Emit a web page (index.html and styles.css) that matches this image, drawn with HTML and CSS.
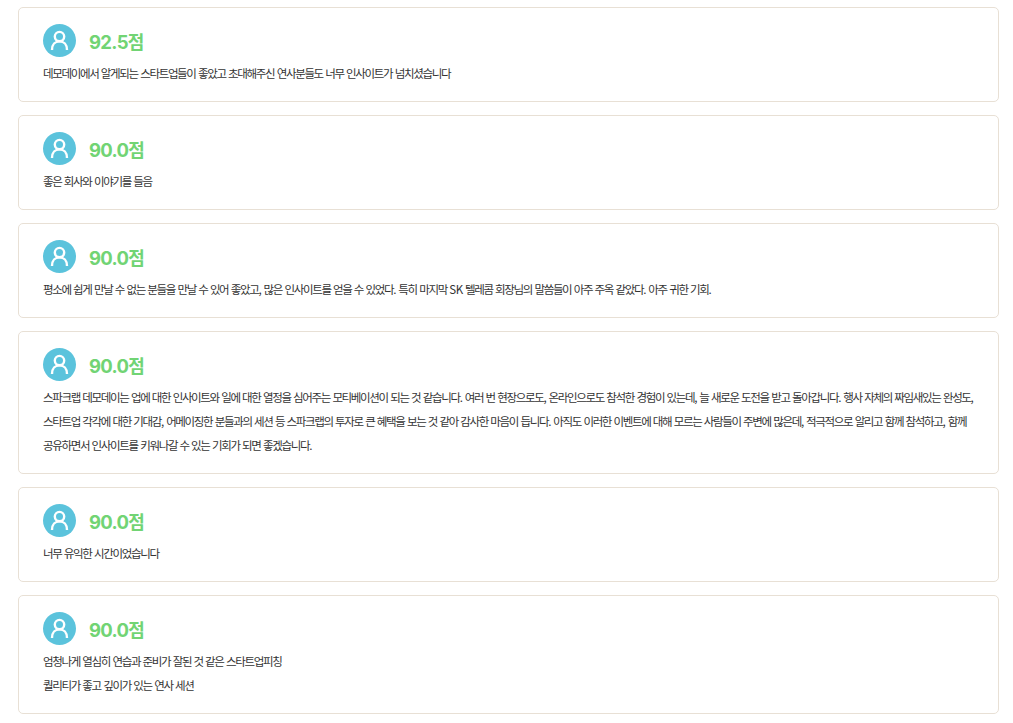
FILE: index.html
```html
<!DOCTYPE html>
<html lang="ko">
<head>
<meta charset="utf-8">
<title>후기</title>
<link rel="stylesheet" href="styles.css">
</head>
<body>
<svg class="defs" width="0" height="0" aria-hidden="true">
  <symbol id="user" viewBox="0 0 33 33">
    <circle cx="16.5" cy="16.5" r="16.5" fill="#5bc3dc"/>
    <circle cx="16.5" cy="12.6" r="4.7" fill="none" stroke="#fff" stroke-width="2.4"/>
    <path d="M9 26C9 20.6 12.2 17.4 16.5 17.4S24 20.6 24 26" fill="none" stroke="#fff" stroke-width="2.4"/>
  </symbol>
</svg>
<main class="reviews">
  <article class="card">
    <header class="head"><svg class="avatar"><use href="#user"/></svg><strong class="score">92.5<span class="unit">점</span></strong></header>
    <p class="text">데모데이에서 알게되는 스타트업들이 좋았고 초대해주신 연사분들도 너무 인사이트가 넘치셨습니다</p>
  </article>
  <article class="card">
    <header class="head"><svg class="avatar"><use href="#user"/></svg><strong class="score">90.0<span class="unit">점</span></strong></header>
    <p class="text">좋은 회사와 이야기를 들음</p>
  </article>
  <article class="card">
    <header class="head"><svg class="avatar"><use href="#user"/></svg><strong class="score">90.0<span class="unit">점</span></strong></header>
    <p class="text">평소에 쉽게 만날 수 없는 분들을 만날 수 있어 좋았고<span class="p">,</span> 많은 인사이트를 얻을 수 있었다<span class="p">.</span> 특히 마지막 <span class="p">SK</span> 텔레콤 회장님의 말씀들이 아주 주옥 같았다<span class="p">.</span> 아주 귀한 기회<span class="p">.</span></p>
  </article>
  <article class="card">
    <header class="head"><svg class="avatar"><use href="#user"/></svg><strong class="score">90.0<span class="unit">점</span></strong></header>
    <p class="text">스파크랩 데모데이는 업에 대한 인사이트와 일에 대한 열정을 심어주는 모티베이션이 되는 것 같습니다<span class="p">.</span> 여러 번 현장으로도<span class="p">,</span> 온라인으로도 참석한 경험이 있는데<span class="p">,</span> 늘 새로운 도전을 받고 돌아갑니다<span class="p">.</span> 행사 자체의 짜임새있는 완성도<span class="p">,</span><br>스타트업 각각에 대한 기대감<span class="p">,</span> 어메이징한 분들과의 세션 등 스파크랩의 투자로 큰 혜택을 보는 것 같아 감사한 마음이 듭니다<span class="p">.</span> 아직도 이러한 이벤트에 대해 모르는 사람들이 주변에 많은데<span class="p">,</span> 적극적으로 알리고 함께 참석하고<span class="p">,</span> 함께<br>공유하면서 인사이트를 키워나갈 수 있는 기회가 되면 좋겠습니다<span class="p">.</span></p>
  </article>
  <article class="card">
    <header class="head"><svg class="avatar"><use href="#user"/></svg><strong class="score">90.0<span class="unit">점</span></strong></header>
    <p class="text">너무 유익한 시간이었습니다</p>
  </article>
  <article class="card">
    <header class="head"><svg class="avatar"><use href="#user"/></svg><strong class="score">90.0<span class="unit">점</span></strong></header>
    <p class="text">엄청나게 열심히 연습과 준비가 잘된 것 같은 스타트업피칭<br>퀄리티가 좋고 깊이가 있는 연사 세션</p>
  </article>
</main>
</body>
</html>
```
FILE: styles.css
```css
* { box-sizing: border-box; }
body {
  margin: 0;
  background: #fff;
  color: #333;
  font-family: "Noto Sans CJK KR", sans-serif;
  overflow: hidden;
}
.defs { display: none; }
.reviews {
  display: flex;
  flex-direction: column;
  gap: 13px;
  padding: 7px 14px 0 18px;
}
.card {
  padding: 16px 24px;
  border: 1px solid #e8e0d5;
  border-radius: 5px;
}
.head {
  display: flex;
  height: 37px;
  gap: 13px;
}
.avatar { width: 33px; height: 33px; flex: none; }
.score {
  color: #71d474;
  font: 700 18.5px/35px Inter, "Noto Sans CJK KR", sans-serif;
  letter-spacing: -0.7px;
}
.unit { font-size: 18px; font-family: "Noto Sans CJK KR", sans-serif; }
.text {
  margin: 0;
  font-size: 11.5px;
  line-height: 24px;
  letter-spacing: -1.34px;
  word-spacing: 0.5px;
  white-space: nowrap;
}
.p { letter-spacing: -0.5px; }
```
